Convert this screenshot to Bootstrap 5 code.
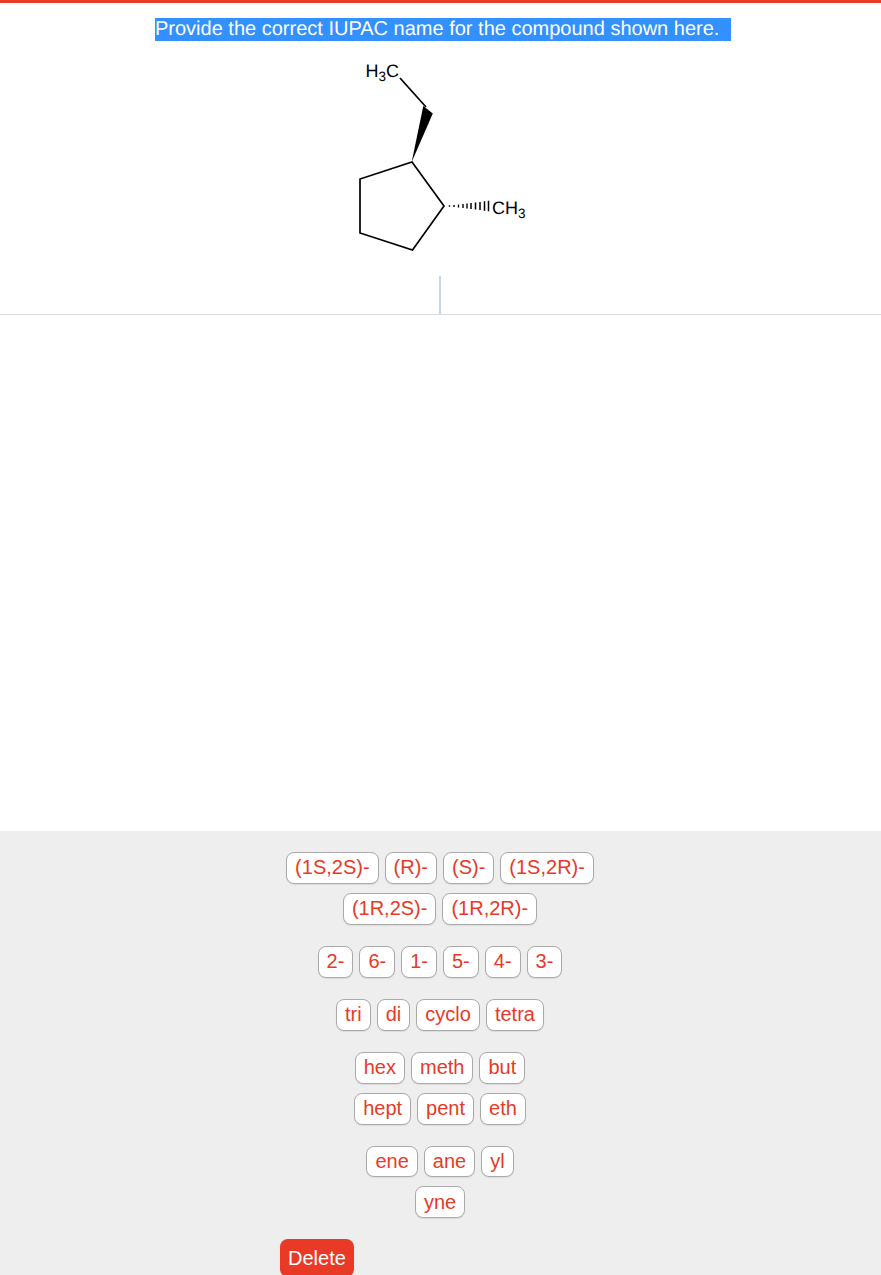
<!DOCTYPE html>
<html lang="en">
<head>
<meta charset="utf-8">
<title>IUPAC name question</title>
<link href="https://cdn.jsdelivr.net/npm/bootstrap@5.3.0/dist/css/bootstrap.min.css" rel="stylesheet">
<style>
html, body { height: 100%; overflow: hidden; }
body { font-family: "Liberation Sans", Arial, sans-serif; font-size: 20px; line-height: 23px; color: #000; background: #fff; display: flex; flex-direction: column; text-rendering: geometricPrecision; }
.top-stripe { height: 3px; flex: none; background: #e83a26; }
.prompt-area { padding-top: 15px; padding-left: 155px; height: 41px; flex: none; }
.prompt-text { background: #3390ff; color: #fff; display: block; width: 576px; white-space: pre; height: 23px; }
.mol { display: block; margin-left: 340px; flex: none; }
.mol text { font-family: "Liberation Sans", Arial, sans-serif; font-size: 18px; fill: #000; }
.answer-line { height: 39px; flex: none; border-bottom: 1px solid #d8dde0; }
.caret-bar { width: 2px; height: 38px; background: #c5d8ea; margin-left: 439px; }
.blank-space { height: 516px; flex: none; }
.tray { flex: 1 1 auto; min-height: 0; background: #eee; padding-top: 21px; padding-right: 1px; }
.chip-row { gap: 6px; margin-bottom: 9px; }
.chip-group { margin-bottom: 21px; }
.chip-group .chip-row:last-child { margin-bottom: 0; }
.chip { font-size: 20px; line-height: 23px; padding: 3px 8px 4px; color: #e83a26; background: #fff; border: 1px solid #aaa; border-radius: 8px; box-shadow: 0 1px 1px rgba(0,0,0,.08); }
.chip:hover { color: #e83a26; background: #fff; border-color: #aaa; }
.tight .chip { padding-top: 3px; padding-bottom: 3px; }
.drop .chip { padding-top: 4px; padding-bottom: 3px; }
.del-wrap { padding-left: 280px; }
.del-btn { font-size: 20px; line-height: 23px; padding: 8px 8px 7px; color: #fff; background: #e83a26; border: 0; border-radius: 8px; }
.del-btn:hover { color: #fff; background: #e83a26; }
</style>
</head>
<body>
<div class="top-stripe"></div>
<div class="prompt-area"><span class="prompt-text">Provide the correct IUPAC name for the compound shown here.</span></div>
<svg class="mol" width="200" height="232" viewBox="340 44 200 232" xmlns="http://www.w3.org/2000/svg" aria-label="cyclopentane structure">
  <g fill="none" stroke="#000" stroke-width="1.7" stroke-linejoin="miter">
    <path d="M400 78 L426 107"/>
    <path d="M412 162 L444 206 L412.5 250 L360 233 L360 179 Z"/>
  </g>
  <path d="M411.7 162 L423.3 106 L432.8 113.5 Z" fill="#000"/>
  <g stroke="#000" fill="none">
    <path stroke-width="1.4" d="M449.5 205.2v1.6M454 205v2M458.5 204.5v3M463 204v4M467 203.6v4.8"/>
    <path stroke-width="1.5" d="M471 203v6M475.5 202.5v7M480 202v8M484.5 201.3v9.4M488.5 200.8v10.4"/>
  </g>
  <text x="365.5" y="76.5">H<tspan font-size="13.5" dy="4.5">3</tspan><tspan dy="-4.5">C</tspan></text>
  <text x="492" y="213.5">CH<tspan font-size="13.5" dy="4.5">3</tspan></text>
</svg>
<div class="answer-line"><div class="caret-bar"></div></div>
<div class="blank-space"></div>
<div class="tray">
  <div class="chip-group">
    <div class="chip-row d-flex justify-content-center">
      <button type="button" class="btn chip">(1S,2S)-</button>
      <button type="button" class="btn chip">(R)-</button>
      <button type="button" class="btn chip">(S)-</button>
      <button type="button" class="btn chip">(1S,2R)-</button>
    </div>
    <div class="chip-row d-flex justify-content-center">
      <button type="button" class="btn chip">(1R,2S)-</button>
      <button type="button" class="btn chip">(1R,2R)-</button>
    </div>
  </div>
  <div class="chip-group">
    <div class="chip-row d-flex justify-content-center">
      <button type="button" class="btn chip">2-</button>
      <button type="button" class="btn chip">6-</button>
      <button type="button" class="btn chip">1-</button>
      <button type="button" class="btn chip">5-</button>
      <button type="button" class="btn chip">4-</button>
      <button type="button" class="btn chip">3-</button>
    </div>
  </div>
  <div class="chip-group">
    <div class="chip-row d-flex justify-content-center">
      <button type="button" class="btn chip">tri</button>
      <button type="button" class="btn chip">di</button>
      <button type="button" class="btn chip">cyclo</button>
      <button type="button" class="btn chip">tetra</button>
    </div>
  </div>
  <div class="chip-group">
    <div class="chip-row d-flex justify-content-center">
      <button type="button" class="btn chip">hex</button>
      <button type="button" class="btn chip">meth</button>
      <button type="button" class="btn chip">but</button>
    </div>
    <div class="chip-row d-flex justify-content-center">
      <button type="button" class="btn chip">hept</button>
      <button type="button" class="btn chip">pent</button>
      <button type="button" class="btn chip">eth</button>
    </div>
  </div>
  <div class="chip-group">
    <div class="chip-row tight d-flex justify-content-center">
      <button type="button" class="btn chip">ene</button>
      <button type="button" class="btn chip">ane</button>
      <button type="button" class="btn chip">yl</button>
    </div>
    <div class="chip-row drop d-flex justify-content-center">
      <button type="button" class="btn chip">yne</button>
    </div>
  </div>
  <div class="del-wrap"><button type="button" class="btn del-btn">Delete</button></div>
</div>
<script src="https://cdn.jsdelivr.net/npm/bootstrap@5.3.0/dist/js/bootstrap.bundle.min.js"></script>
</body>
</html>
